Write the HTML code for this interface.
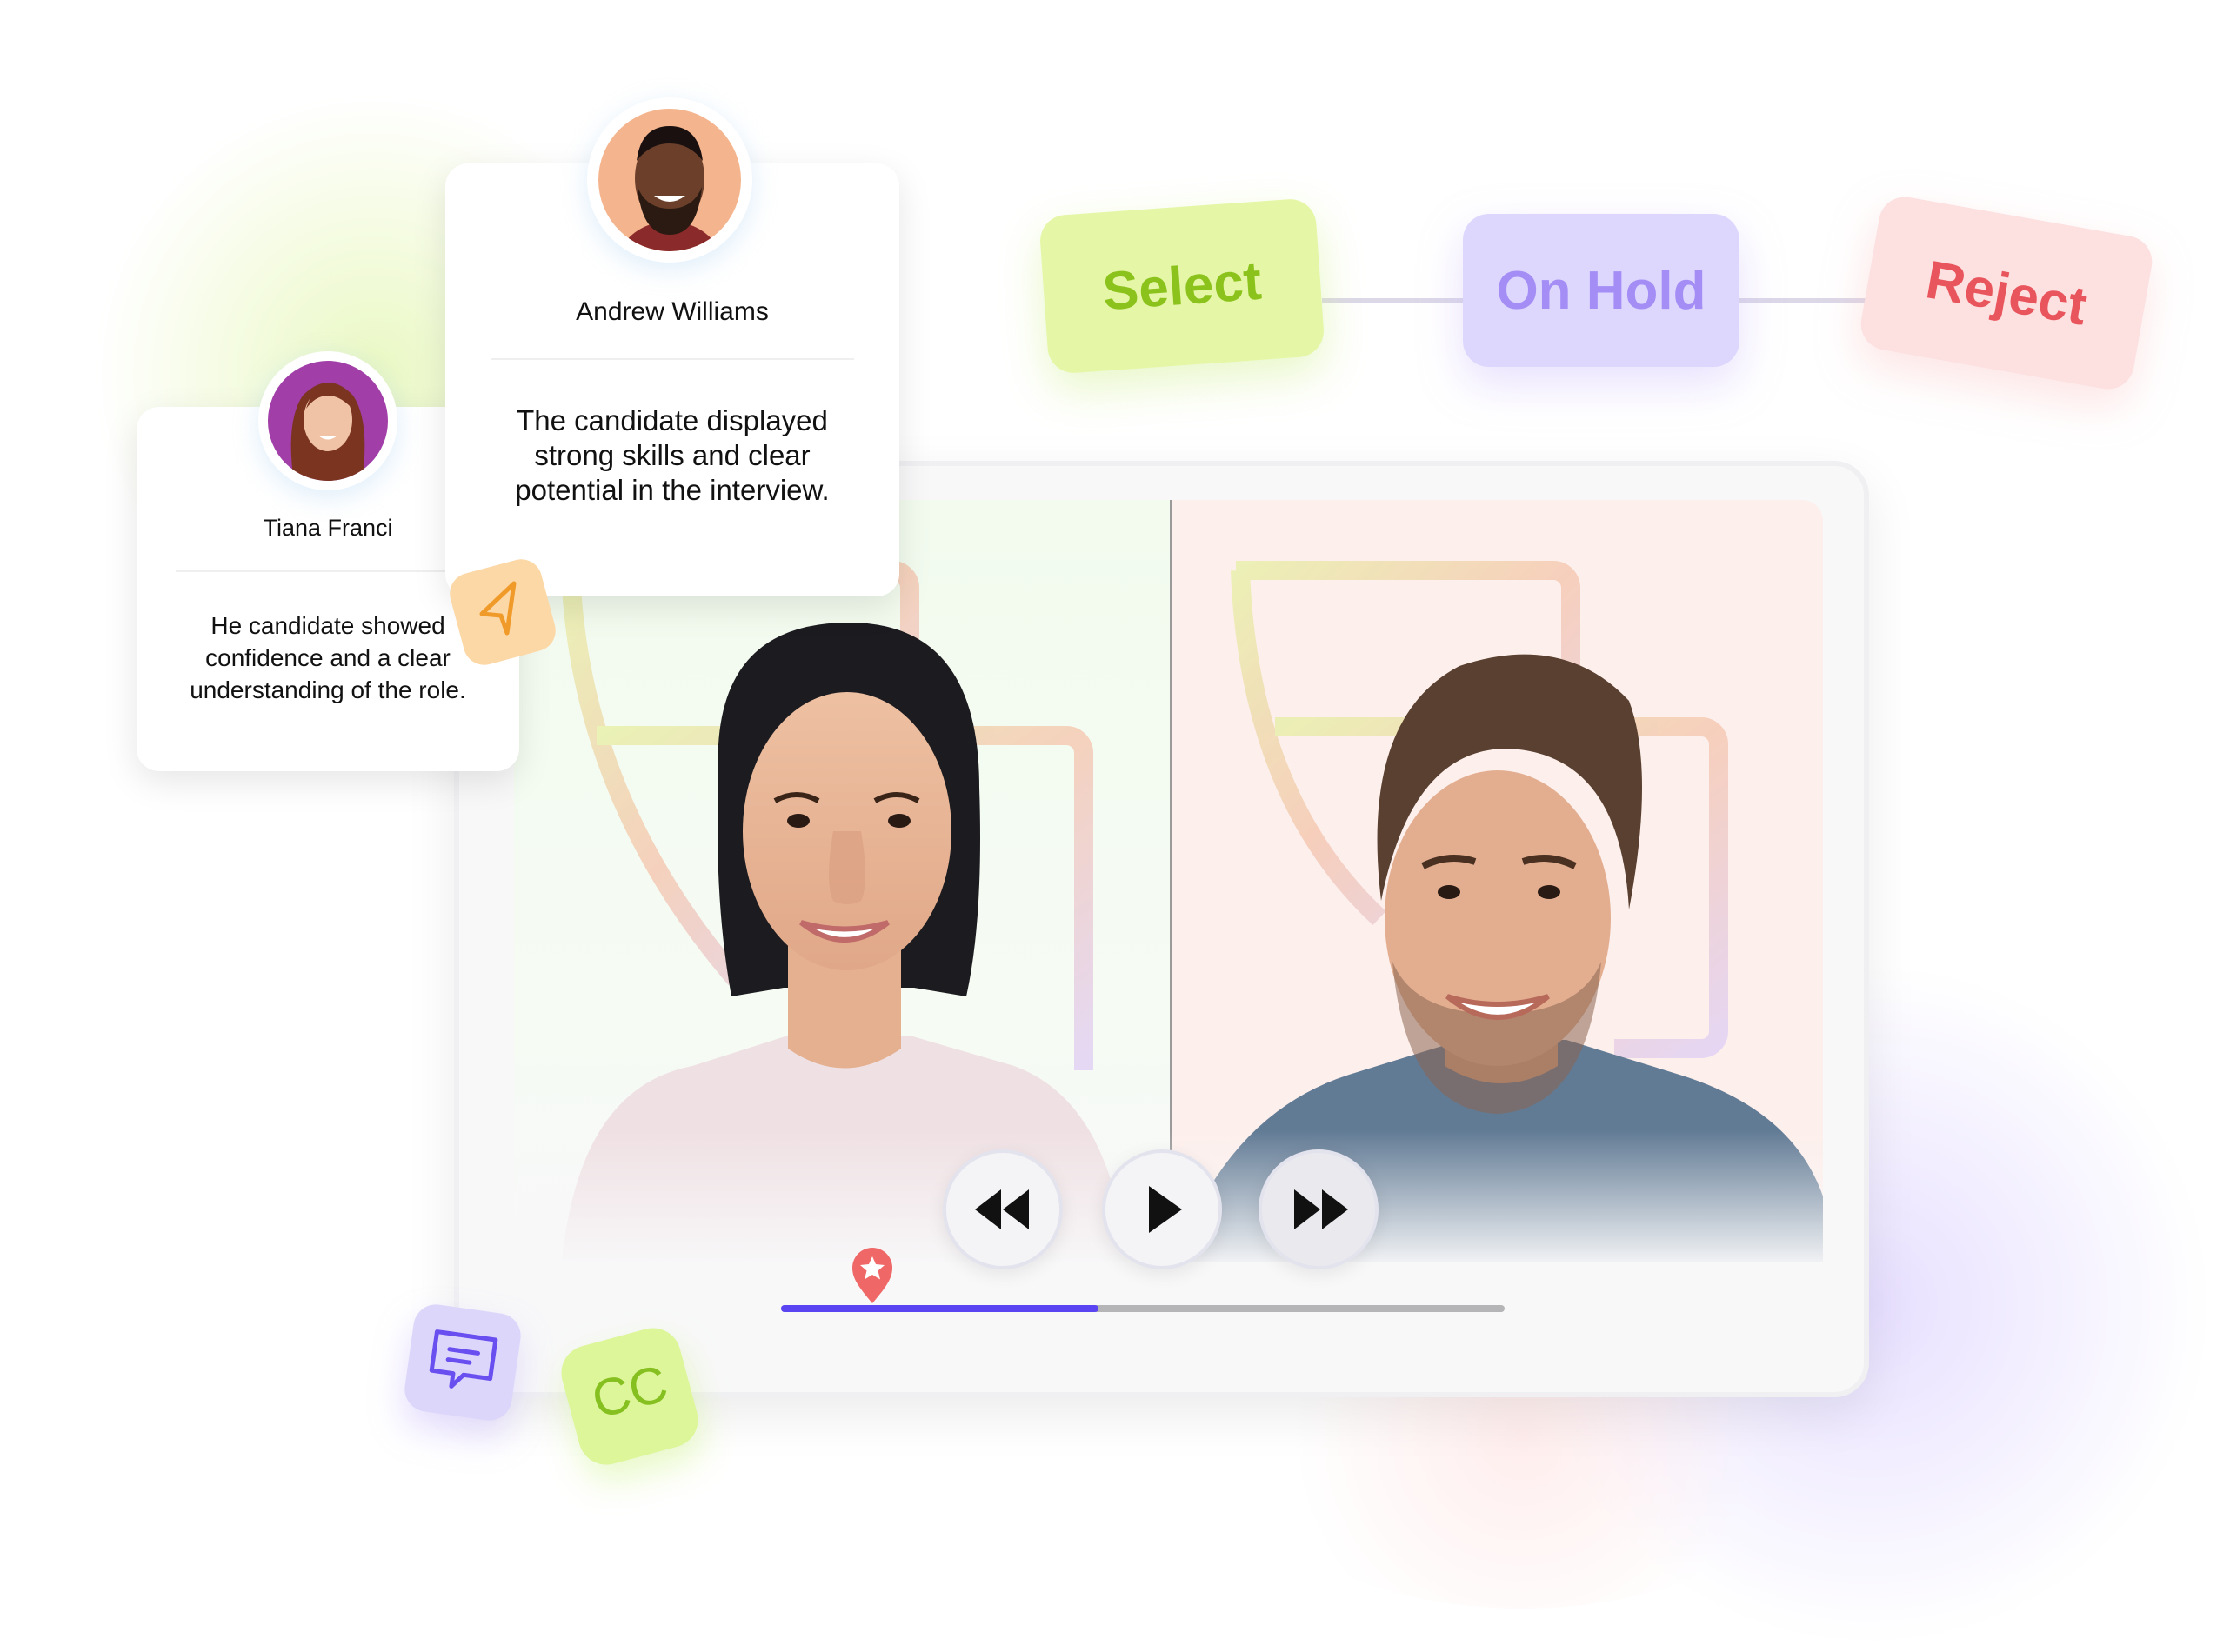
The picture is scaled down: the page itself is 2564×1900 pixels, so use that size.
<!DOCTYPE html>
<html><head><meta charset="utf-8"><style>
*{margin:0;padding:0;box-sizing:border-box}
body{width:2564px;height:1880px;background:#fff;position:relative;overflow:hidden;font-family:"Liberation Sans",sans-serif}
.a{position:absolute}
.card{background:#fff;border-radius:26px;box-shadow:0 12px 40px rgba(0,0,0,.10);text-align:center;color:#111}
.btn{border-radius:30px;display:flex;align-items:center;justify-content:center;font-weight:bold;font-size:62px}
.ctl{width:138px;height:138px;border-radius:50%;background:#f4f4f6;border:4px solid #e3e3ee;box-shadow:0 6px 20px rgba(0,0,0,.08)}
</style></head><body>
<div class="a" style="left:80px;top:80px;width:700px;height:700px;border-radius:50%;background:radial-gradient(circle,rgba(225,245,170,.7),rgba(255,255,255,0) 65%)"></div>
<div class="a" style="left:1700px;top:1100px;width:900px;height:800px;border-radius:50%;background:radial-gradient(circle,rgba(225,215,255,.8),rgba(255,255,255,0) 65%)"></div>
<div class="a" style="left:1400px;top:1450px;width:700px;height:400px;border-radius:50%;background:radial-gradient(circle,rgba(255,225,225,.6),rgba(255,255,255,0) 65%)"></div>

<div class="a" style="left:522px;top:530px;width:1627px;height:1077px;background:#f8f8f9;border-radius:40px;border:6px solid #f0f0f3;box-shadow:0 20px 60px rgba(0,0,0,.08)"></div>
<div class="a" style="left:591px;top:575px;width:756px;height:876px;background:linear-gradient(#f2fbee,#f6fbf4 70%,#f8f8f9)"></div>
<div class="a" style="left:1347px;top:575px;width:749px;height:876px;background:#fdefec;border-top-right-radius:24px"></div>
<div class="a" style="left:1345px;top:575px;width:2px;height:876px;background:#9a9a9a"></div>
<svg class="a" style="left:-4px;top:-4px" width="2564" height="1880">
<defs>
<linearGradient id="g1" x1="0" y1="0" x2="1" y2="1"><stop offset="0" stop-color="#e8f0a8"/><stop offset=".5" stop-color="#f5c7b0"/><stop offset="1" stop-color="#e0d0f5"/></linearGradient>
<linearGradient id="sk" x1="0" y1="0" x2="0" y2="1"><stop offset="0" stop-color="#eec0a2"/><stop offset="1" stop-color="#e0a888"/></linearGradient>
</defs>
<g fill="none" stroke="url(#g1)" stroke-width="22" opacity=".8">
<path d="M650 660 H1030 a20 20 0 0 1 20 20 V850 M660 660 q10 260 190 470"/>
<path d="M690 850 H1230 a20 20 0 0 1 20 20 V1235"/>
<path d="M1425 660 H1790 a20 20 0 0 1 20 20 V840 M1430 660 q10 260 160 400"/>
<path d="M1470 840 H1960 a20 20 0 0 1 20 20 V1190 a20 20 0 0 1 -20 20 H1860"/>
</g>
<!-- woman -->
<path d="M830 900 q-10-180 150-180 q150 0 150 190 q5 150-15 240 l-60-10 -150 0 -60 10 q-20-110-15-250z" fill="#1c1c20"/>
<path d="M650 1455 q20-200 150-225 l110-35 h140 l120 35 q110 40 130 225z" fill="#efe0e3"/>
<path d="M910 1080 h130 v130 q-65 45 -130 0z" fill="#e4b090"/>
<ellipse cx="978" cy="960" rx="120" ry="160" fill="url(#sk)"/>
<path d="M850 920 q15-170 130-170 q120 0 135 170 q-40-130-135-130 q-95 0-130 130z" fill="#1c1c20"/>
<path d="M895 925 q25-14 50 0 M1010 925 q25-14 50 0" stroke="#3a2418" stroke-width="6" fill="none"/>
<ellipse cx="922" cy="948" rx="13" ry="8" fill="#2a1a14"/><ellipse cx="1038" cy="948" rx="13" ry="8" fill="#2a1a14"/>
<path d="M962 960 q-10 60 0 80 q16 8 32 0 q10-20 0-80" fill="#d89c7e" opacity=".6"/>
<path d="M925 1065 q50 40 100 0 q-50 15 -100 0z" fill="#fff" stroke="#c06a6a" stroke-width="6"/>
<!-- man -->
<path d="M1355 1455 q60-170 200-215 l130-40 h120 l130 40 q130 40 165 140 v75z" fill="#627b95"/>
<path d="M1665 1110 h130 v120 q-65 40 -130 0z" fill="#d29d82"/>
<ellipse cx="1726" cy="1060" rx="130" ry="170" fill="#e3ae90"/>
<path d="M1592 1040 q-25-210 90-270 q120-40 195 40 q30 80 0 240 q-10-180-140-185 q-110 0-145 175z" fill="#5a4030"/>
<path d="M1605 1110 q15 170 120 175 q105-5 120-175 q-25 60-120 60 q-95 0-120-60z" fill="#8a6450" opacity=".55"/>
<path d="M1640 1000 q30-15 60-5 M1755 995 q30-10 60 5" stroke="#4a3020" stroke-width="8" fill="none"/>
<ellipse cx="1670" cy="1030" rx="13" ry="8" fill="#2a1a14"/><ellipse cx="1785" cy="1030" rx="13" ry="8" fill="#2a1a14"/>
<path d="M1668 1150 q58 48 116 0 q-58 18 -116 0z" fill="#fff" stroke="#b86a5a" stroke-width="6"/>
</svg>
<div class="a" style="left:596px;top:1300px;width:1500px;height:160px;background:linear-gradient(rgba(248,248,249,0),#f8f8f9)"></div>

<div class="a ctl" style="left:1084px;top:1322px"></div>
<div class="a ctl" style="left:1267px;top:1322px"></div>
<div class="a ctl" style="left:1447px;top:1322px;background:#e9e9ee"></div>
<svg class="a" style="left:1121px;top:1368px" width="64" height="46"><path d="M30 0 L0 23 L30 46Z M62 0 L32 23 L62 46Z" fill="#111"/></svg>
<svg class="a" style="left:1319px;top:1364px" width="42" height="54"><path d="M2 0 L40 27 L2 54Z" fill="#111"/></svg>
<svg class="a" style="left:1488px;top:1368px" width="64" height="46"><path d="M0 0 L30 23 L0 46Z M32 0 L62 23 L32 46Z" fill="#111"/></svg>

<div class="a" style="left:898px;top:1501px;width:832px;height:8px;background:#b5b5b8;border-radius:4px"></div>
<div class="a" style="left:898px;top:1501px;width:365px;height:8px;background:#5b45f2;border-radius:4px"></div>
<svg class="a" style="left:978px;top:1433px" width="50" height="68"><path d="M25 66 C10 48 2 38 2 25 A23 23 0 0 1 48 25 C48 38 40 48 25 66Z" fill="#ef6767"/><path d="M25 12 l4 9 10 1-7.5 6.5 2.5 10-9-5.5-9 5.5 2.5-10L11 22l10-1z" fill="#fff"/></svg>

<!-- Tiana card (under) -->
<div class="a card" style="left:157px;top:468px;width:440px;height:419px">
<div style="position:absolute;left:0;right:0;top:124px;font-size:27px">Tiana Franci</div>
<div style="position:absolute;left:45px;right:45px;top:188px;height:2px;background:#efefef"></div>
<div style="position:absolute;left:0;right:0;top:233px;font-size:28px;line-height:37px">He candidate showed<br>confidence and a clear<br>understanding of the role.</div>
</div>
<div class="a" style="left:297px;top:404px;width:160px;height:160px;border-radius:50%;background:#fff;box-shadow:0 8px 30px rgba(150,200,240,.3)"></div>
<svg class="a" style="left:308px;top:415px" width="138" height="138"><clipPath id="c2"><circle cx="69" cy="69" r="69"/></clipPath><g clip-path="url(#c2)"><rect width="138" height="138" fill="#a13ea8"/><path d="M30 140 q-10-70 10-100 q30-30 58 0 q20 30 10 100z" fill="#7a3420"/><ellipse cx="69" cy="68" rx="28" ry="36" fill="#f0c2a6"/><path d="M44 55 q10-30 25-30 q20 0 28 30 q-14-15-28-15 q-14 0-25 15z" fill="#7a3420"/><path d="M58 86 q11 9 22 0z" fill="#fff"/></g></svg>

<!-- Andrew card (on top) -->
<div class="a card" style="left:512px;top:188px;width:522px;height:498px">
<div style="position:absolute;left:0;right:0;top:154px;font-size:30px">Andrew Williams</div>
<div style="position:absolute;left:52px;right:52px;top:224px;height:2px;background:#efefef"></div>
<div style="position:absolute;left:0;right:0;top:276px;font-size:33px;line-height:40px">The candidate displayed<br>strong skills and clear<br>potential in the interview.</div>
</div>
<div class="a" style="left:675px;top:112px;width:190px;height:190px;border-radius:50%;background:#fff;box-shadow:0 8px 30px rgba(150,200,240,.3)"></div>
<svg class="a" style="left:688px;top:125px" width="164" height="164"><clipPath id="c1"><circle cx="82" cy="82" r="82"/></clipPath><g clip-path="url(#c1)"><rect width="164" height="164" fill="#f4b58e"/><path d="M20 170 q20-40 62-40 q42 0 62 40z" fill="#8a2a2a"/><ellipse cx="82" cy="80" rx="40" ry="55" fill="#6b3f2a"/><path d="M45 90 q5 55 37 55 q32 0 37-55 q-10 25-37 25 q-27 0-37-25z" fill="#2a1a12"/><path d="M44 60 q5-40 38-40 q33 0 38 40 q-15-20-38-20 q-23 0-38 20z" fill="#1a1010"/><path d="M64 100 q18 14 36 0z" fill="#fff"/></g></svg>

<div class="a" style="left:524px;top:650px;width:108px;height:108px;border-radius:24px;background:#fcd8a6;transform:rotate(-15deg)"></div>
<svg class="a" style="left:546px;top:666px" width="60" height="70"><path d="M45 5 L8 40 L30 42 L37 62Z" fill="none" stroke="#f09a2a" stroke-width="5" stroke-linejoin="round"/></svg>

<div class="a" style="left:1520px;top:343px;width:165px;height:5px;background:#dcd8e8"></div>
<div class="a" style="left:2000px;top:343px;width:150px;height:5px;background:#dcd8e8"></div>
<div class="a btn" style="left:1200px;top:238px;width:318px;height:182px;background:#e5f7a6;color:#8bc21c;transform:rotate(-4deg);box-shadow:0 20px 50px rgba(200,235,120,.4)">Select</div>
<div class="a btn" style="left:1682px;top:246px;width:318px;height:176px;background:#ddd7fd;color:#a48ef6;box-shadow:0 20px 50px rgba(190,170,250,.35)">On Hold</div>
<div class="a btn" style="left:2148px;top:248px;width:318px;height:178px;background:#fde0e0;color:#e8555c;transform:rotate(10deg);box-shadow:0 20px 50px rgba(250,180,180,.35)">Reject</div>

<div class="a" style="left:470px;top:1505px;width:124px;height:124px;border-radius:26px;background:#ddd6fb;transform:rotate(8deg);box-shadow:0 20px 40px rgba(180,160,250,.35)"></div>
<svg class="a" style="left:490px;top:1526px" width="84" height="80"><g transform="rotate(8 42 40)" fill="none" stroke="#6a4ff0" stroke-width="5" stroke-linejoin="round" stroke-linecap="round"><path d="M8 10 H76 V55 H45 L33 70 V55 H8Z"/><path d="M25 28 H58 M25 40 H50"/></g></svg>

<div class="a" style="left:654px;top:1536px;width:140px;height:140px;border-radius:32px;background:#ddf69a;transform:rotate(-15deg);box-shadow:0 20px 40px rgba(200,240,120,.4)"></div>
<div class="a" style="left:654px;top:1566px;width:140px;text-align:center;font-size:60px;color:#86c020;transform:rotate(-15deg)">CC</div>
</body></html>
